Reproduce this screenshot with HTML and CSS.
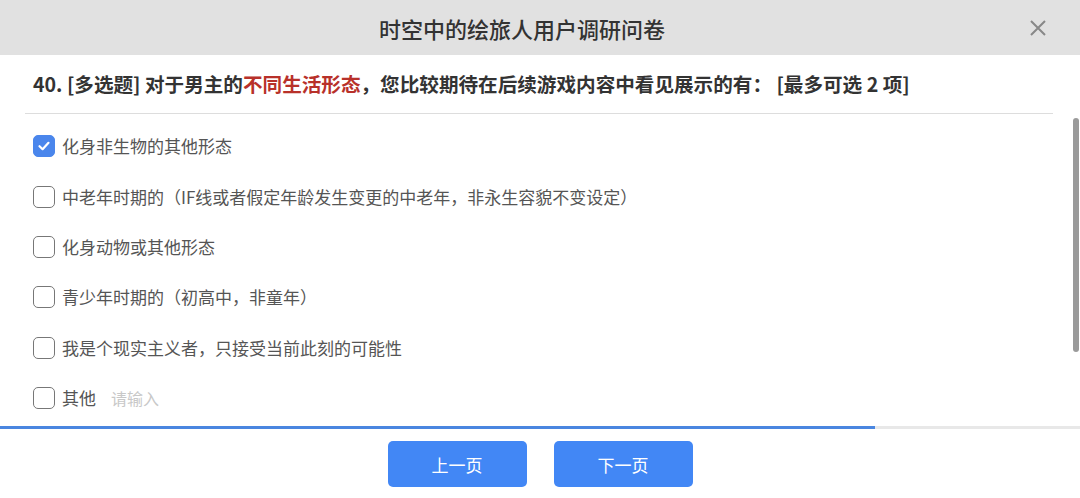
FILE: index.html
```html
<!DOCTYPE html>
<html lang="zh-CN">
<head>
    <meta charset="UTF-8">
    <meta name="viewport" content="width=device-width, initial-scale=1.0">
    <title>时空中的绘旅人用户调研问卷</title>
    <link rel="stylesheet" href="styles.css">
</head>
<body>
    <header class="header">
        <h1 class="title">时空中的绘旅人用户调研问卷</h1>
        <button class="close" aria-label="关闭">
            <svg width="18" height="18" viewBox="0 0 18 18">
                <path d="M2 2 L16 16 M16 2 L2 16" stroke="#888" stroke-width="2" fill="none"/>
            </svg>
        </button>
    </header>

    <main class="survey">
        <h2 class="question">40. [多选题] 对于男主的<span class="hl">不同生活形态</span>，您比较期待在后续游戏内容中看见展示的有： [最多可选 2 项]</h2>

        <div class="scroll">
            <ul class="options">
                <li class="option">
                    <span class="box checked">
                        <svg width="14" height="14" viewBox="0 0 14 14">
                            <path d="M2.5 7.2 L5.6 10.2 L11.5 3.8" stroke="#fff" stroke-width="2.2" fill="none" stroke-linecap="round" stroke-linejoin="round"/>
                        </svg>
                    </span>
                    <span>化身非生物的其他形态</span>
                </li>
                <li class="option"><span class="box"></span><span>中老年时期的（IF线或者假定年龄发生变更的中老年，非永生容貌不变设定）</span></li>
                <li class="option"><span class="box"></span><span>化身动物或其他形态</span></li>
                <li class="option"><span class="box"></span><span>青少年时期的（初高中，非童年）</span></li>
                <li class="option"><span class="box"></span><span>我是个现实主义者，只接受当前此刻的可能性</span></li>
                <li class="option"><span class="box"></span><span>其他</span><span class="other">请输入</span></li>
            </ul>
            <div class="thumb"></div>
        </div>

        <div class="progress"><div class="progress-fill" style="width: 81%"></div></div>

        <div class="pager">
            <button class="btn">上一页</button>
            <button class="btn">下一页</button>
        </div>
    </main>
</body>
</html>
```

FILE: styles.css
```css
html {
    font-family: "Noto Sans CJK SC", "Noto Sans", sans-serif;
}

body {
    margin: 0;
    background: #fff;
    color: #333;
    overflow: hidden;
}

.header {
    position: relative;
    height: 55px;
    padding-right: 36px;
    background: #e1e1e1;
    display: flex;
    align-items: center;
    justify-content: center;
}

.title {
    margin: 0;
    font-size: 22px;
    font-weight: 500;
    color: #333;
}

.close {
    position: absolute;
    right: 33px;
    top: 19px;
    padding: 0;
    border: none;
    background: none;
    width: 18px;
    height: 18px;
}

.question {
    margin: 0 27px 0 25px;
    padding: 13px 0 13px 8px;
    font-size: 19.6px;
    line-height: 32px;
    font-weight: 700;
    color: #333;
    border-bottom: 1px solid #ddd;
}

.hl {
    color: #b8312a;
}

.scroll {
    position: relative;
    height: 295px;
    overflow: hidden;
}

.options {
    list-style: none;
    margin: 0;
    padding: 7px 0 0 33px;
}

.option {
    height: 50.4px;
    display: flex;
    align-items: center;
    font-size: 17px;
    line-height: 20px;
    color: #555;
}

.box {
    width: 20px;
    height: 20px;
    border: 1px solid #777;
    border-radius: 5px;
    margin-right: 7px;
    display: flex;
    align-items: center;
    justify-content: center;
    flex-shrink: 0;
}

.box.checked {
    background: #4a86ec;
    border-color: #4a86ec;
}

.other {
    margin-left: 15px;
    color: #c8c8c8;
    font-size: 16px;
}

.thumb {
    position: absolute;
    right: 1px;
    top: 4px;
    width: 6px;
    height: 234px;
    border-radius: 3px;
    background: #9a9a9a;
}

.progress {
    margin-top: 17px;
    height: 3px;
    background: #e8e8e8;
}

.progress-fill {
    height: 100%;
    background: #4a86e0;
}

.pager {
    display: flex;
    justify-content: center;
    gap: 27px;
    margin-top: 12px;
}

.btn {
    width: 139px;
    height: 46px;
    border: none;
    border-radius: 5px;
    background: #4287f5;
    color: #fff;
    font-family: inherit;
    font-size: 17px;
}
```
